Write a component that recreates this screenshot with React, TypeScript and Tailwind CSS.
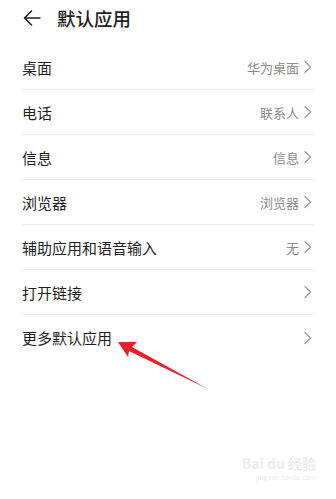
import React from 'react';

const rows: { label: string; value?: string }[] = [
  { label: '桌面', value: '华为桌面' },
  { label: '电话', value: '联系人' },
  { label: '信息', value: '信息' },
  { label: '浏览器', value: '浏览器' },
  { label: '辅助应用和语音输入', value: '无' },
  { label: '打开链接' },
  { label: '更多默认应用' },
];

function Chevron() {
  return (
    <svg width="8" height="14" viewBox="0 0 8 14" fill="none" className="ml-[5px]">
      <path d="M1 1.5L6.5 7L1 12.5" stroke="#9a9a9a" strokeWidth="1.2" strokeLinecap="round" strokeLinejoin="round" />
    </svg>
  );
}

export default function App() {
  return (
    <div
      className="relative w-[336px] h-[499px] bg-white overflow-hidden text-[#1f1f1f]"
      style={{ fontFamily: '"Noto Sans CJK SC", "Noto Sans", sans-serif' }}
    >
      {/* header */}
      <div className="flex items-center h-[36px] pl-[22px]">
        <svg width="20" height="18" viewBox="0 0 20 18" fill="none">
          <path d="M18 9H3M9.5 2L2.5 9L9.5 16" stroke="#222" strokeWidth="1.6" strokeLinecap="round" strokeLinejoin="round" />
        </svg>
        <h1 className="ml-[15px] text-[18.5px] leading-none font-medium">默认应用</h1>
      </div>

      {/* list */}
      <div className="pt-[9px] px-[22px]">
        {rows.map((r, i) => (
          <div
            key={r.label}
            className={`flex items-center justify-between h-[45px] ${i < rows.length - 1 ? 'border-b border-[#ececec]' : ''}`}
          >
            <span className="text-[15px] leading-none">{r.label}</span>
            <div className="flex items-center mr-[2px]">
              {r.value && <span className="text-[13px] leading-none text-[#8c8c8c]">{r.value}</span>}
              <Chevron />
            </div>
          </div>
        ))}
      </div>

      {/* red annotation arrow */}
      <svg className="absolute left-0 top-0 pointer-events-none" width="336" height="499" viewBox="0 0 336 499">
        <path d="M118 342 L137 342 L132 347 L208 389 L129 351 L128 357 Z" fill="#e8202a" />
      </svg>

      {/* watermark */}
      <div className="absolute right-[20px] top-[456px] flex flex-col items-end gap-[4px] text-[#ededed] leading-none">
        <span className="text-[14px] leading-none font-bold">Bai du 经验</span>
        <span className="text-[7px] leading-none">jingyan.baidu.com</span>
      </div>
    </div>
  );
}
